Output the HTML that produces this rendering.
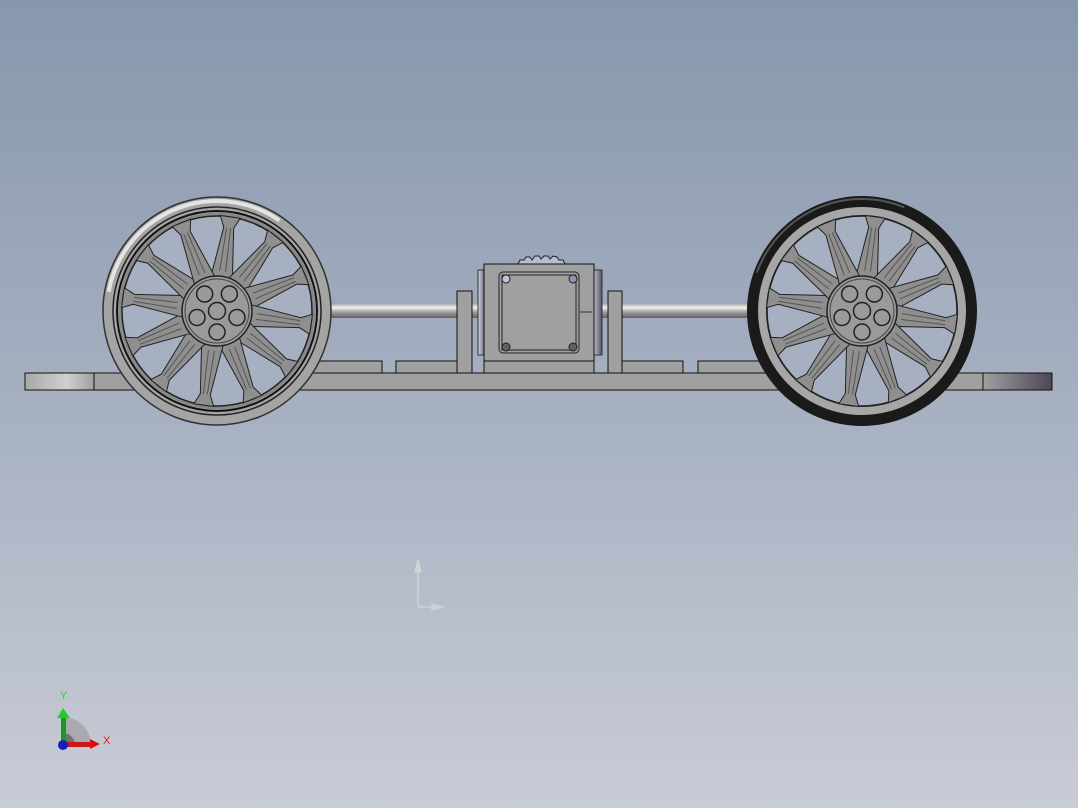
<!DOCTYPE html>
<html><head><meta charset="utf-8"><style>
html,body{margin:0;padding:0;width:1078px;height:808px;overflow:hidden}
svg{display:block}
</style></head><body>
<svg width="1078" height="808" viewBox="0 0 1078 808" xmlns="http://www.w3.org/2000/svg">
<defs>
<linearGradient id="bg" x1="0" y1="0" x2="0" y2="1">
<stop offset="0" stop-color="#8797ad"/><stop offset="0.5" stop-color="#a6b0c1"/><stop offset="1" stop-color="#c9ccd6"/>
</linearGradient>
<linearGradient id="shaft" x1="0" y1="0" x2="0" y2="1">
<stop offset="0" stop-color="#9a9a9a"/><stop offset="0.3" stop-color="#f4f4f4"/><stop offset="0.6" stop-color="#a0a0a0"/><stop offset="1" stop-color="#606060"/>
</linearGradient>
<linearGradient id="lcap" x1="0" y1="0" x2="1" y2="0">
<stop offset="0" stop-color="#a8a8a8"/><stop offset="0.6" stop-color="#d0d0d0"/><stop offset="1" stop-color="#a0a0a0"/>
</linearGradient>
<linearGradient id="rcap" x1="0" y1="0" x2="1" y2="0">
<stop offset="0" stop-color="#a0a0a0"/><stop offset="1" stop-color="#4e4656"/>
</linearGradient>
<linearGradient id="gear" x1="0" y1="0" x2="1" y2="0">
<stop offset="0" stop-color="#d8d8e8"/><stop offset="1" stop-color="#505068"/>
</linearGradient>
<g id="spoke">
<path d="M-11,-32 L-5,-84 L-10,-95 L10,-95 L5,-84 L11,-32 Z" fill="#8f8f8f" stroke="#222" stroke-width="1"/>
<path d="M-3,-40 L-2,-84 M3,-40 L2,-84" stroke="#555" stroke-width="1"/>
</g>
<g id="hub">
<circle r="35" fill="#9a9a9a" stroke="#222" stroke-width="1.5"/>
<circle r="32" fill="none" stroke="#444" stroke-width="1"/>
<circle cx="0" cy="0" r="8.5" fill="#9a9a9a" stroke="#222" stroke-width="1.5"/>
<circle cx="0" cy="-21" r="8" fill="#9a9a9a" stroke="#222" stroke-width="1.5" transform="rotate(36)"/>
<circle cx="0" cy="-21" r="8" fill="#9a9a9a" stroke="#222" stroke-width="1.5" transform="rotate(108)"/>
<circle cx="0" cy="-21" r="8" fill="#9a9a9a" stroke="#222" stroke-width="1.5" transform="rotate(180)"/>
<circle cx="0" cy="-21" r="8" fill="#9a9a9a" stroke="#222" stroke-width="1.5" transform="rotate(252)"/>
<circle cx="0" cy="-21" r="8" fill="#9a9a9a" stroke="#222" stroke-width="1.5" transform="rotate(324)"/>
</g>
<g id="spokes">
<use href="#spoke" transform="rotate(8)"/><use href="#spoke" transform="rotate(38)"/><use href="#spoke" transform="rotate(68)"/><use href="#spoke" transform="rotate(98)"/><use href="#spoke" transform="rotate(128)"/><use href="#spoke" transform="rotate(158)"/><use href="#spoke" transform="rotate(188)"/><use href="#spoke" transform="rotate(218)"/><use href="#spoke" transform="rotate(248)"/><use href="#spoke" transform="rotate(278)"/><use href="#spoke" transform="rotate(308)"/><use href="#spoke" transform="rotate(338)"/>
</g>
</defs>
<rect width="1078" height="808" fill="url(#bg)"/>

<rect x="176" y="290" width="82" height="84" fill="#9c9c9c" stroke="#222"/>
<rect x="820" y="290" width="83" height="84" fill="#9c9c9c" stroke="#222"/>

<rect x="250" y="303" width="520" height="15" fill="url(#shaft)"/>

<rect x="313" y="361" width="69" height="13" fill="#a0a0a0" stroke="#111"/>
<rect x="396" y="361" width="76" height="13" fill="#a0a0a0" stroke="#111"/>
<rect x="608" y="361" width="75" height="13" fill="#a0a0a0" stroke="#111"/>
<rect x="698" y="361" width="75" height="13" fill="#a0a0a0" stroke="#111"/>
<rect x="457" y="291" width="15" height="83" fill="#a0a0a0" stroke="#111"/>
<rect x="608" y="291" width="14" height="83" fill="#a0a0a0" stroke="#111"/>

<!-- motor -->
<path d="M518,264 L520,260 L524,260 L526,257 L530,257 L532,260 L535,256 L539,256 L541,259 L544,256 L548,256 L550,259 L553,256 L557,257 L559,260 L563,260 L565,264 Z" fill="#b8bcd4" stroke="#222"/>
<rect x="478" y="270" width="8" height="85" fill="url(#gear)" stroke="#333"/>
<rect x="592" y="270" width="10" height="85" fill="url(#gear)" stroke="#333"/>
<rect x="484" y="264" width="110" height="110" fill="#a0a0a0" stroke="#111"/>
<line x1="484" y1="361" x2="594" y2="361" stroke="#111"/>
<rect x="499" y="272" width="80" height="81" rx="4" fill="#a0a0a0" stroke="#222"/>
<rect x="502" y="275" width="74" height="75" fill="#a0a0a0" stroke="#222"/>
<circle cx="506" cy="279" r="4" fill="#c0c4d8" stroke="#222"/>
<circle cx="573" cy="279" r="4" fill="#9094a8" stroke="#222"/>
<circle cx="506" cy="347" r="4" fill="#606068" stroke="#222"/>
<circle cx="573" cy="347" r="4" fill="#606068" stroke="#222"/>
<line x1="580" y1="312" x2="592" y2="312" stroke="#333"/>

<rect x="25" y="373" width="1027" height="17" fill="#a0a0a0" stroke="#111"/>
<rect x="25" y="373" width="69" height="17" fill="url(#lcap)" stroke="#111"/>
<rect x="983" y="373" width="69" height="17" fill="url(#rcap)" stroke="#111"/>

<g transform="translate(217,311)">
<circle r="114" fill="#a4a4a4" stroke="#333" stroke-width="1.5"/>
<circle r="110" fill="none" stroke="#e4e4e4" stroke-width="4" stroke-dasharray="220 600" transform="rotate(190)"/>
<circle r="104" fill="none" stroke="#222" stroke-width="1.5"/>
<circle r="100" fill="none" stroke="#111" stroke-width="2"/>
<circle r="97" fill="none" stroke="#888" stroke-width="3"/>
<circle r="95" fill="#a6b0c1" stroke="#222" stroke-width="1.5"/>
<use href="#spokes"/>
<use href="#hub"/>
</g>

<g transform="translate(862,311)">
<circle r="115" fill="#1a1a1a"/>
<circle r="112" fill="none" stroke="#555" stroke-width="2" stroke-dasharray="180 600" transform="rotate(200)"/>
<circle r="103" fill="none" stroke="#000" stroke-width="2"/>
<circle r="100" fill="none" stroke="#a6a6a6" stroke-width="8"/>
<circle r="95" fill="#a6b0c1" stroke="#222" stroke-width="1.5"/>
<use href="#spokes"/>
<use href="#hub"/>
</g>

<g stroke="#d0d2d8" fill="#d0d2d8" stroke-width="1.5">
<line x1="418" y1="570" x2="418" y2="607"/>
<line x1="418" y1="607" x2="436" y2="607"/>
<path d="M415,572 L418,560 L421,572 Z"/>
<path d="M432,604 L442,607 L432,610 Z"/>
</g>

<path d="M63,745 L63,717 A28,28 0 0 1 91,745 Z" fill="#a8aab0"/>
<path d="M63,745 L63,733 A12,12 0 0 1 75,745 Z" fill="#707278"/>
<rect x="61" y="717" width="5" height="28" fill="#1a9a1a"/>
<path d="M57,718 L63,708 L70,718 Z" fill="#22cc22"/>
<rect x="63" y="742" width="28" height="5" fill="#c81818"/>
<path d="M90,739 L100,744 L90,749 Z" fill="#d81010"/>
<circle cx="63" cy="745" r="5" fill="#1020c0"/>
<text x="60" y="699" font-family="Liberation Sans, sans-serif" font-size="11" fill="#22dd22">Y</text>
<text x="103" y="744" font-family="Liberation Sans, sans-serif" font-size="11" fill="#ee1111">X</text>
</svg>
</body></html>
